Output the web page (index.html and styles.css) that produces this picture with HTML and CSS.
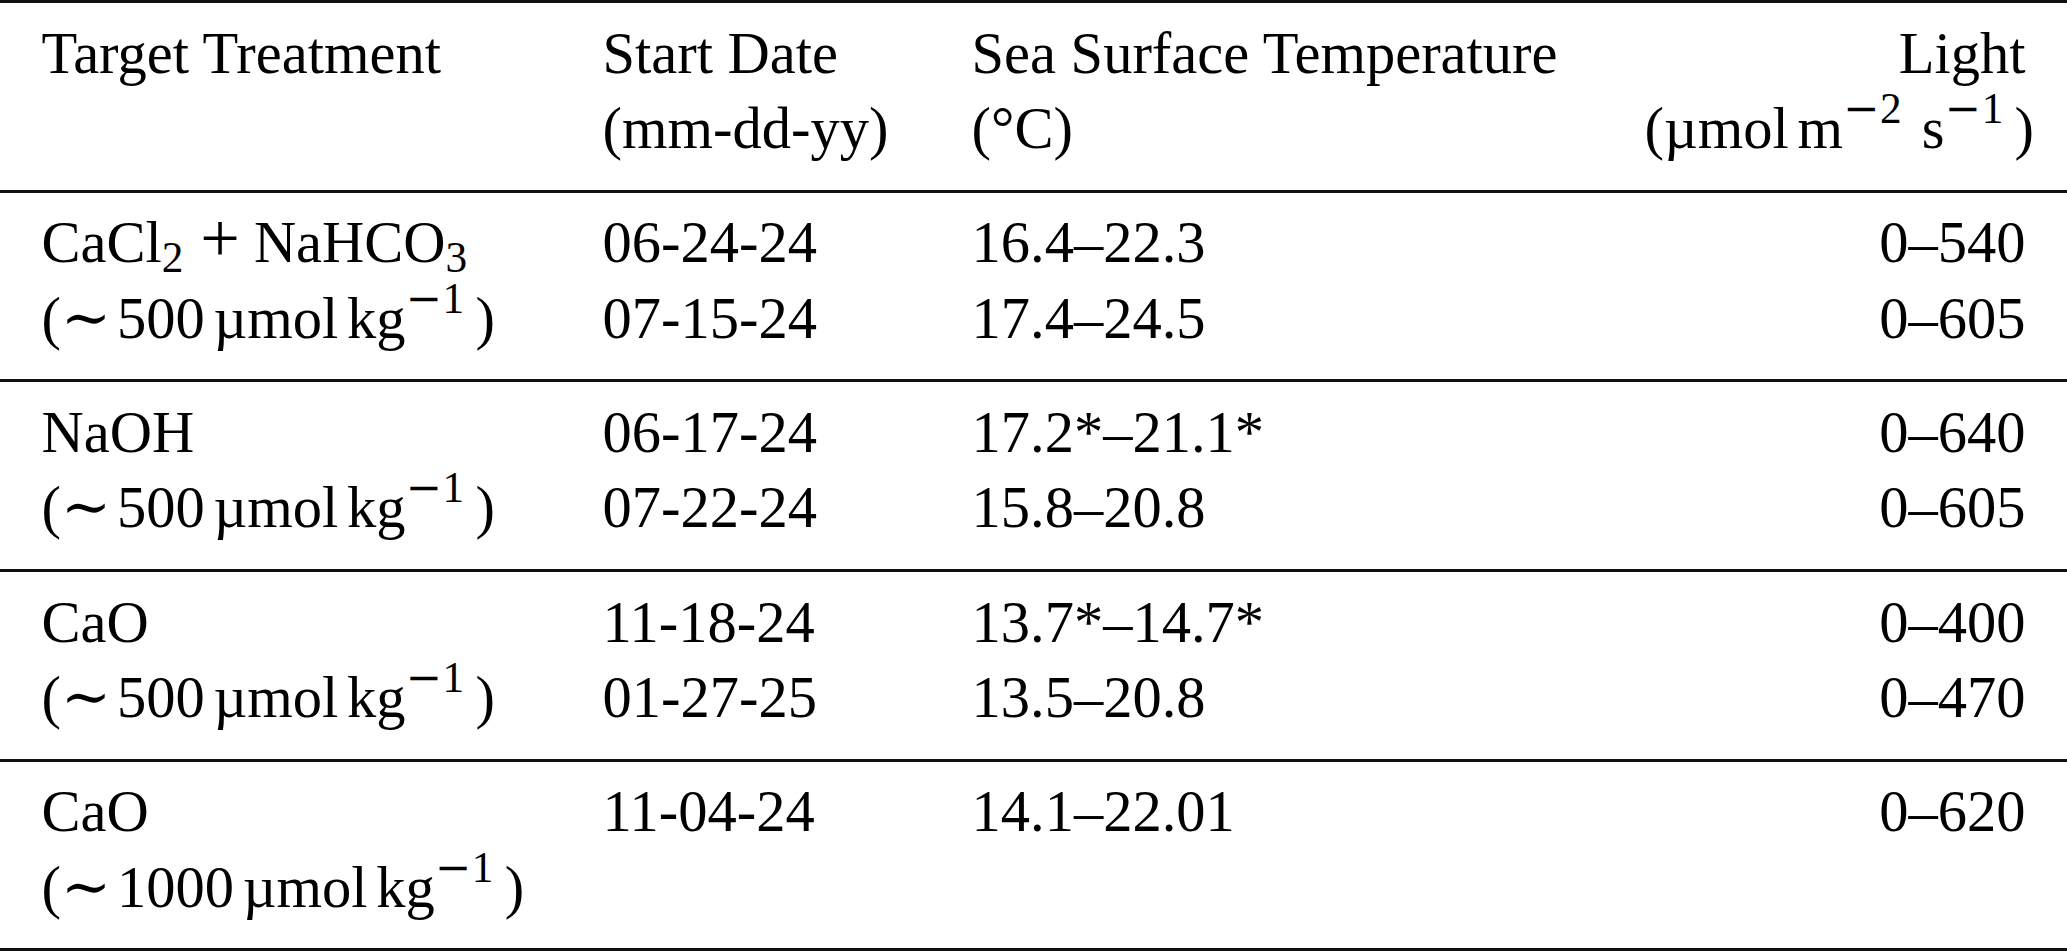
FILE: index.html
```html
<!DOCTYPE html>
<html lang="en">
<head>
<meta charset="utf-8">
<title>Treatments</title>
<link rel="stylesheet" href="styles.css">
</head>
<body>
<table class="tbl">
  <thead>
    <tr>
      <th class="c1"><div class="ln">Target Treatment</div><div class="ln">&nbsp;</div></th>
      <th class="c2"><div class="ln">Start Date</div><div class="ln">(mm-dd-yy)</div></th>
      <th class="c3"><div class="ln">Sea Surface Temperature</div><div class="ln">(°C)</div></th>
      <th class="c4 r"><div class="ln">Light</div><div class="ln">(µmol<span class="ts"></span>m<span class="sup"><span class="mn">−</span>2</span><span class="ts"></span>s<span class="sup"><span class="mn">−</span>1</span>)</div></th>
    </tr>
  </thead>
  <tbody>
    <tr>
      <td><div class="ln">CaCl<span class="sub">2</span><span class="op">+</span>NaHCO<span class="sub">3</span></div><div class="ln">(<span class="sim">∼</span>500<span class="ts"></span>µmol<span class="ts"></span>kg<span class="sup"><span class="mn">−</span>1</span>)</div></td>
      <td><div class="ln">06-24-24</div><div class="ln">07-15-24</div></td>
      <td><div class="ln">16.4–22.3</div><div class="ln">17.4–24.5</div></td>
      <td class="r"><div class="ln">0–540</div><div class="ln">0–605</div></td>
    </tr>
    <tr>
      <td><div class="ln">NaOH</div><div class="ln">(<span class="sim">∼</span>500<span class="ts"></span>µmol<span class="ts"></span>kg<span class="sup"><span class="mn">−</span>1</span>)</div></td>
      <td><div class="ln">06-17-24</div><div class="ln">07-22-24</div></td>
      <td><div class="ln">17.2*–21.1*</div><div class="ln">15.8–20.8</div></td>
      <td class="r"><div class="ln">0–640</div><div class="ln">0–605</div></td>
    </tr>
    <tr>
      <td><div class="ln">CaO</div><div class="ln">(<span class="sim">∼</span>500<span class="ts"></span>µmol<span class="ts"></span>kg<span class="sup"><span class="mn">−</span>1</span>)</div></td>
      <td><div class="ln">11-18-24</div><div class="ln">01-27-25</div></td>
      <td><div class="ln">13.7*–14.7*</div><div class="ln">13.5–20.8</div></td>
      <td class="r"><div class="ln">0–400</div><div class="ln">0–470</div></td>
    </tr>
    <tr>
      <td><div class="ln">CaO</div><div class="ln">(<span class="sim">∼</span>1000<span class="ts"></span>µmol<span class="ts"></span>kg<span class="sup"><span class="mn">−</span>1</span>)</div></td>
      <td><div class="ln">11-04-24</div></td>
      <td><div class="ln">14.1–22.01</div></td>
      <td class="r"><div class="ln">0–620</div></td>
    </tr>
  </tbody>
</table>
</body>
</html>
```

FILE: styles.css
```css
html, body {
  margin: 0;
  padding: 0;
  background: #ffffff;
}

body {
  font-family: "Liberation Serif", "DejaVu Serif", serif;
  font-size: 58.5px;
  color: #000000;
  overflow: hidden;
}

.tbl {
  width: 2067px;
  border-collapse: separate;
  border-spacing: 0;
  table-layout: fixed;
}

.tbl th,
.tbl td {
  box-sizing: border-box;
  border-top: 3px solid #111111;
  padding: 12.5px 41.5px 23px 41.5px;
  font-weight: normal;
  text-align: left;
  vertical-align: top;
  line-height: 75.6px;
  white-space: nowrap;
}

.tbl tbody tr:last-child td {
  border-bottom: 3px solid #111111;
}

.tbl .c1 { width: 561px; }
.tbl .c2 { width: 369px; }
.tbl .c3 { width: 673px; }
.tbl .c4 { width: 464px; }

.tbl .r {
  text-align: right;
}

.ln {
  height: 75.6px;
}

.sub {
  font-size: 0.74em;
  line-height: 0;
  vertical-align: -10px;
}

.sup {
  font-size: 0.74em;
  line-height: 0;
  vertical-align: 25px;
  margin-right: 0.26em;
}

.mn {
  font-family: "DejaVu Serif", serif;
  font-weight: 300;
  margin-right: 0.02em;
}

.op {
  font-size: 1.2em;
  line-height: 0;
  margin: 0 0.2em 0 0.24em;
}

.sim {
  font-family: "DejaVu Serif", serif;
  line-height: 0;
  font-size: 1.02em;
  margin-right: 0.1em;
}

.ts {
  display: inline-block;
  width: 0.15em;
}
```
